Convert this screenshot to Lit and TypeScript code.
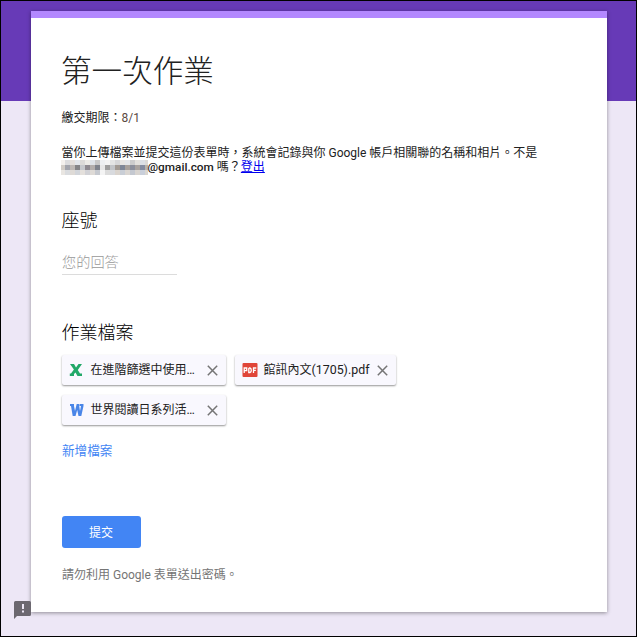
import { LitElement, html, css, svg } from "lit";
import { customElement, property } from "lit/decorators.js";

const excel = svg`<path d="M1 1h4l2 3.500L9.500 1H13L8.800 7 11 10.500h2V13H8.500L6.500 9.500 5 11v2H.8v-2.500H2L4.900 6.500Z" fill="#21a868"/>`;
const word = svg`<path d="M1 1h4v2l1 5 1.700-7h2.200l1.100 7L12 3h-1.500V1h4v2L12.300 13H9.500L8.200 7 6.500 13H3.700L2 3H1Z" fill="#4a86e8"/>`;
const pdf = svg`<rect x=".5" width="15" height="14" rx="1" fill="#e04538"/><g fill="none" stroke="#fff" stroke-width="1.300"><path d="M2.200 10V5h2.500v2.600H2.200M6.800 5v4.500H8q1.300-.2 1.300-2.200T8 5H6.800M11.500 10V5h2.800M11.500 7.300h2.300"/></g>`;

const maskRows = [
  ["#f4f1ee", "#dcdcde", "#e4e0dc", "#e2e6ea", "#dcdad8", "#eceae6", "#dfe3e8", "#c8c8c8", "#eef0f2", "#f4f4f4", "#e4e4e4", "#d6d6d8", "#e8e6e2", "#e4e6e8", "#cccccc", "#e2e0dc", "#dce0e6", "#dcdad8"],
  ["#d2cdc7", "#a3a5ad", "#beb9b5", "#858587", "#c6c8cc", "#8f8a90", "#b3aeac", "#7f838c", "#e8e8e8", "#9f9f9f", "#c2c4c8", "#a29a94", "#7f8796", "#a8a19b", "#8b8f9b", "#a8a29e", "#838ba0", "#b9b3ac"],
  ["#e9e6e2", "#dadcdf", "#dedad6", "#d2d5da", "#e4e0dc", "#d2d2d6", "#dedad6", "#c6c9cf", "#f4f4f4", "#dcdcdc", "#d8dade", "#dad4ce", "#c9ced6", "#dad6d2", "#c4c8d0", "#d8d4d0", "#c9cfda", "#dad6d0"],
];

@customElement("file-chip")
class FileChip extends LitElement {
  @property() kind = "word";
  @property() name = "";
  static styles = css`
    :host { display: flex; align-items: center; box-sizing: border-box; height: 30px; padding: 0 8px 0 7px; background: #f9f8fe; border-radius: 2px; box-shadow: 0 1px 2px rgba(0,0,0,.42); color: #212121; font-size: 12px; }
    .icon { display: block; width: 15px; height: 14px; flex: none; overflow: visible; }
    .name { margin-left: 6.500px; flex: 1; white-space: nowrap; line-height: 16px; }
    .latin { font-size: 12.400px; }
    .close { display: block; width: 11px; height: 11px; flex: none; }
  `;
  render() {
    const icon = this.kind === "excel" ? excel : this.kind === "pdf" ? pdf : word;
    const at = this.name.search(/[(.…]/);
    return html`<svg class="icon" viewBox="0 0 15 14">${icon}</svg>
      <span class="name">${this.name.slice(0, at)}<span class="latin">${this.name.slice(at)}</span></span>
      <svg class="close" viewBox="0 0 11 11"><path d="M.8.8l9.400 9.400M10.200.8.8 10.200" stroke="#757575" stroke-width="1.500"/></svg>`;
  }
}

@customElement("app-root")
class AppRoot extends LitElement {
  static styles = css`
    :host { display: block; box-sizing: border-box; width: 637px; height: 637px; border: 1px solid #000; padding: 10px 29px 0 30px; overflow: hidden; position: relative; background: linear-gradient(#673ab7 100px, #ede7f6 100px); font-family: Roboto, "Noto Sans CJK TC", sans-serif; font-size: 12px; color: #212121; }
    .card { box-sizing: border-box; width: 576px; height: 601px; padding: 32px 31px 0; border-top: 7px solid #b388ff; background: #fff; box-shadow: 0 1px 4px rgba(0,0,0,.4); white-space: nowrap; }
    h1 { margin: 0 0 0 -1px; font-size: 30.6px; font-weight: 300; line-height: 44px; }
    .due { margin: 16px 0 0 -0.5px; line-height: 16px; }
    .date { color: #5b4a43; }
    .note { margin: 20px 0 0 -0.5px; line-height: 14px; }
    .account { display: flex; align-items: center; height: 14px; }
    .mask { width: 87px; height: 15px; margin-left: -1px; flex: none; }
    .mail { font-weight: 500; font-size: 11.800px; }
    .gap { margin-left: 3px; }
    .link { color: #00e; text-decoration: underline; }
    .q { font-size: 18px; line-height: 24px; color: #000; font-weight: 300; margin-left: -0.5px; }
    .seat { margin-top: 35px; }
    .input { width: 115px; height: 25px; margin-top: 17px; box-sizing: border-box; border-bottom: 1px solid #dcdcdc; color: #999; font-size: 14.2px; line-height: 24px; font-weight: 300; }
    .files { margin-top: 46px; }
    .chips { display: grid; grid-template-columns: 164px 161px; gap: 10px 9px; margin-top: 10px; }
    .add { margin-top: 17px; color: #4285f4; font-size: 12.6px; line-height: 18px; }
    .submit { display: block; width: 79px; height: 32px; margin: 56px 0 0; padding: 0 1px 2px 0; border: 0; border-radius: 3px; background: #4285f4; color: #fff; font: inherit; }
    .warn { margin-top: 18px; line-height: 18px; color: #757575; }
    .report { position: absolute; left: 13px; top: 600px; width: 17px; height: 18px; }
  `;
  render() {
    return html`<div class="card">
        <h1>第一次作業</h1>
        <div class="due">繳交期限：<span class="date">8/1</span></div>
        <div class="note">當你上傳檔案並提交這份表單時，系統會記錄與你 Google 帳戶相關聯的名稱和相片。不是
          <div class="account">
            <svg class="mask" viewBox="0 0 87 15" shape-rendering="crispEdges">${maskRows.map((row, y) => row.map((fill, x) => svg`<rect x=${x * 5 - 1} y=${y * 5} width="5" height="5" fill=${fill} />`))}</svg>
            <span class="mail">@gmail.com</span><span class="gap">嗎？</span><span class="link">登出</span>
          </div>
        </div>
        <div class="q seat">座號</div>
        <div class="input">您的回答</div>
        <div class="q files">作業檔案</div>
        <div class="chips">
          <file-chip kind="excel" name="在進階篩選中使用…"></file-chip>
          <file-chip kind="pdf" name="館訊內文(1705).pdf"></file-chip>
          <file-chip kind="word" name="世界閱讀日系列活…"></file-chip>
        </div>
        <div class="add">新增檔案</div>
        <button class="submit">提交</button>
        <div class="warn">請勿利用 Google 表單送出密碼。</div>
      </div>
      <svg class="report" viewBox="0 0 17 18"><path d="M1.500 0h14Q17 0 17 1.500v12q0 1.500-1.500 1.500H3L0 18V1.500Q0 0 1.500 0Z" fill="#6c6870"/><path d="M8 3h2v5H8ZM8 9.500h2v2H8Z" fill="#ede7f6"/></svg>`;
  }
}
